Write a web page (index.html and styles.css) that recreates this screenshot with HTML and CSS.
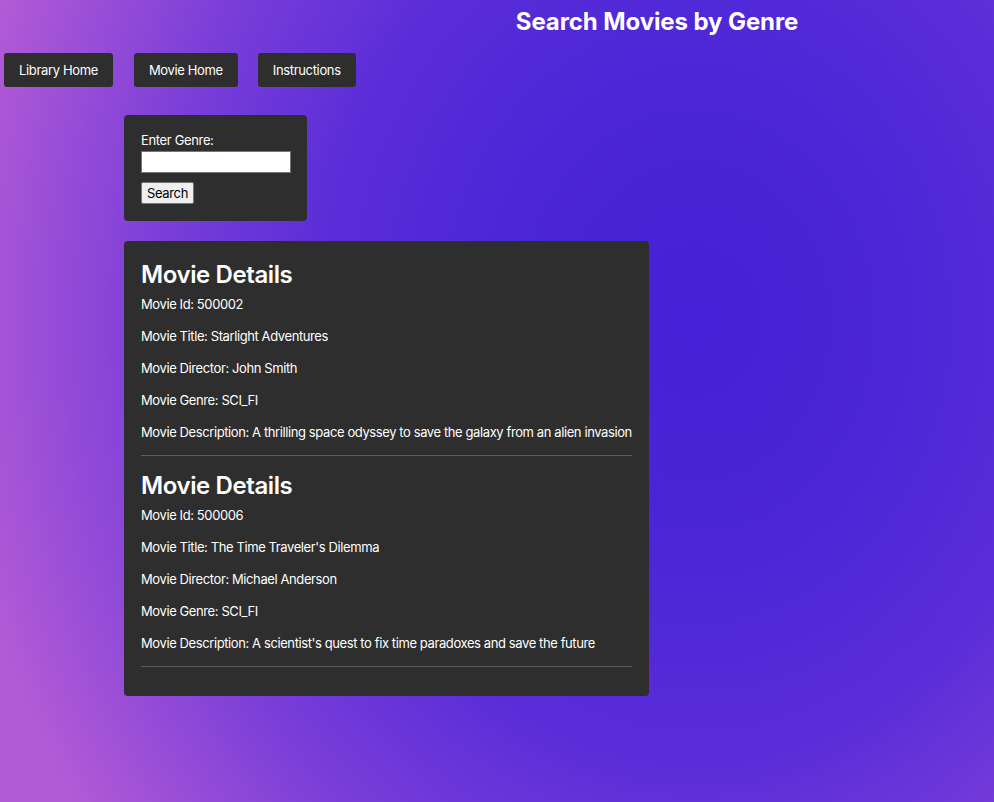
FILE: index.html
```html
<!DOCTYPE html>
<html lang="en">
<head>
<meta charset="utf-8">
<title>Search Movies by Genre</title>
<link rel="stylesheet" href="styles.css">
</head>
<body>
<header class="page-header">
  <h1 class="page-title">Search Movies by Genre</h1>
</header>
<nav class="nav">
  <a class="nav-btn" href="#">Library Home</a>
  <a class="nav-btn" href="#">Movie Home</a>
  <a class="nav-btn" href="#">Instructions</a>
</nav>
<main class="main">
  <form class="card search-card">
    <label class="search-label" for="genre">Enter Genre:</label>
    <input class="search-input" id="genre" type="text">
    <button class="search-btn" type="button">Search</button>
  </form>
  <section class="card details-card">
    <div class="movie">
      <h2 class="movie-heading">Movie Details</h2>
      <p class="movie-line">Movie Id: 500002</p>
      <p class="movie-line">Movie Title: Starlight Adventures</p>
      <p class="movie-line">Movie Director: John Smith</p>
      <p class="movie-line">Movie Genre: SCI_FI</p>
      <p class="movie-line">Movie Description: A thrilling space odyssey to save the galaxy from an alien invasion</p>
      <hr class="movie-rule">
    </div>
    <div class="movie">
      <h2 class="movie-heading">Movie Details</h2>
      <p class="movie-line">Movie Id: 500006</p>
      <p class="movie-line">Movie Title: The Time Traveler's Dilemma</p>
      <p class="movie-line">Movie Director: Michael Anderson</p>
      <p class="movie-line">Movie Genre: SCI_FI</p>
      <p class="movie-line">Movie Description: A scientist's quest to fix time paradoxes and save the future</p>
      <hr class="movie-rule">
    </div>
  </section>
</main>
</body>
</html>
```
FILE: styles.css
```css
html, body {
  margin: 0;
  padding: 0;
}
body {
  min-height: 802px;
  font-family: Inter, "Noto Sans", "Liberation Sans", sans-serif;
  font-size: 13px;
  letter-spacing: -0.35px;
  color: #ffffff;
  background: radial-gradient(ellipse 75% 110% at 70% 40%, #4421d6 0%, #4b25d7 25%, #5a2dd8 50%, #7a3ed8 72%, #b25bd6 100%);
}
.page-header {
  padding: 7px 0 0 320px;
  text-align: center;
}
.page-title {
  margin: 0;
  font-size: 24px;
  font-weight: 700;
  line-height: 29px;
  letter-spacing: -0.1px;
}
.nav {
  display: flex;
  gap: 20px;
  margin-top: 17px;
  padding-left: 4px;
}
.nav-btn {
  display: block;
  padding: 9px 15px;
  line-height: 16px;
  background: #2e2e2e;
  color: #ffffff;
  text-decoration: none;
  border-radius: 3px;
  font-size: 13px;
}
.nav-btn:first-child {
  margin-right: 1px;
}
.main {
  display: flex;
  flex-direction: column;
  align-items: flex-start;
  gap: 20px;
  margin-top: 28px;
  padding-left: 124px;
}
.card {
  background: #2e2e2e;
  border-radius: 4px;
  box-sizing: border-box;
}
.search-card {
  display: flex;
  flex-direction: column;
  align-items: flex-start;
  width: 183px;
  padding: 17px;
  margin: 0;
}
.search-label {
  line-height: 16px;
}
.search-input {
  margin-top: 3px;
  width: 150px;
  height: 22px;
  box-sizing: border-box;
  border: 1px solid #767676;
  background: #ffffff;
  padding: 1px 2px;
  font-size: 13px;
}
.search-btn {
  margin-top: 9px;
  height: 22px;
  padding: 0 5px;
  background: #efefef;
  border: 1px solid #767676;
  border-radius: 2px;
  color: #000000;
  font-family: Inter, "Noto Sans", "Liberation Sans", sans-serif;
  font-size: 13px;
  letter-spacing: -0.35px;
  line-height: 18px;
}
.details-card {
  width: 525px;
  padding: 17px 17px 14px;
}
.movie-heading {
  margin: 2px 0 7px;
  font-size: 24px;
  font-weight: 600;
  line-height: 29px;
  letter-spacing: -0.4px;
}
.movie-line {
  margin: 0 0 16px;
  line-height: 16px;
  white-space: nowrap;
  letter-spacing: -0.4px;
}
.movie-line:last-of-type {
  margin-bottom: 15px;
}
.movie-rule {
  margin: 0 0 15px;
  border: 0;
  border-top: 1px solid #5c5c5c;
  height: 0;
}
```
